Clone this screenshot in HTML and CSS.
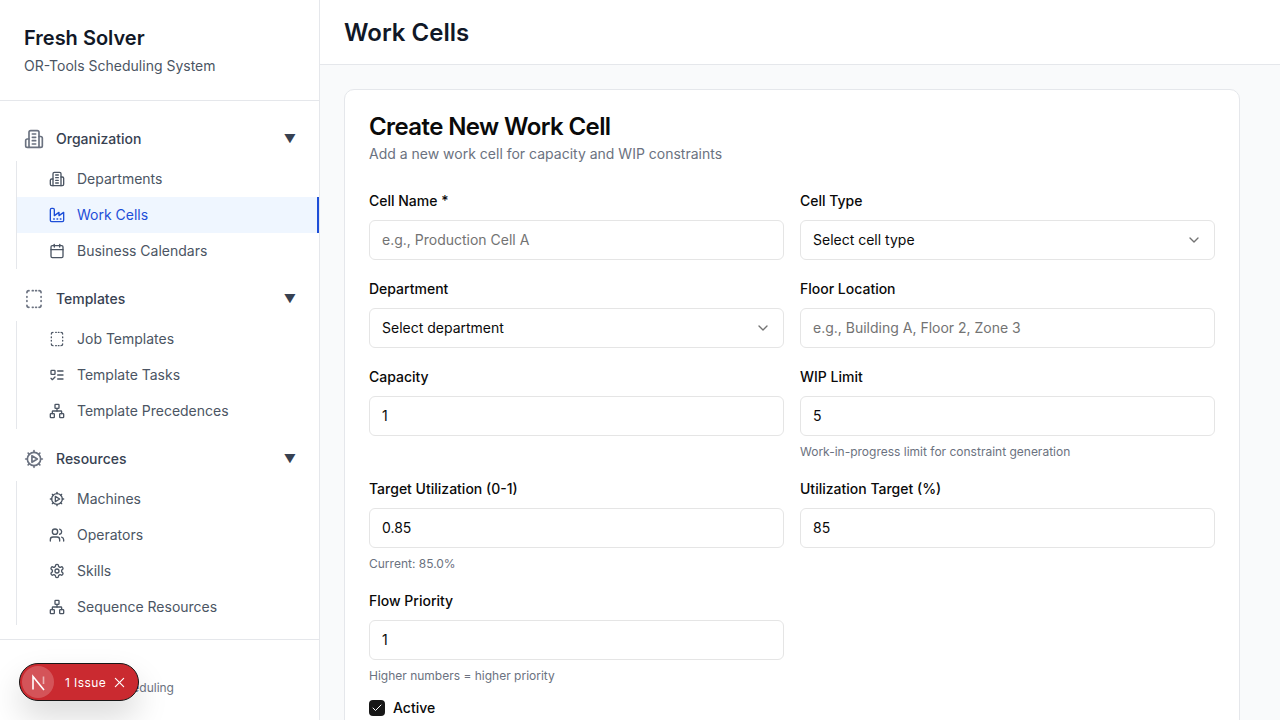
FILE: index.html
```html
<!DOCTYPE html>
<html lang="en">
<head>
  <meta charset="UTF-8">
  <title>Work Cells</title>
  <link rel="stylesheet" href="styles.css">
</head>
<body>
  <svg class="sprite" xmlns="http://www.w3.org/2000/svg">
    <symbol id="i-building" viewBox="0 0 24 24"><path d="M6 22V4a2 2 0 0 1 2-2h8a2 2 0 0 1 2 2v18Z"/><path d="M6 12H4a2 2 0 0 0-2 2v6a2 2 0 0 0 2 2h2"/><path d="M18 9h2a2 2 0 0 1 2 2v9a2 2 0 0 1-2 2h-2"/><path d="M10 6h4"/><path d="M10 10h4"/><path d="M10 14h4"/><path d="M10 18h4"/></symbol>
    <symbol id="i-factory" viewBox="0 0 24 24"><path d="M2 20a2 2 0 0 0 2 2h16a2 2 0 0 0 2-2V8l-7 5V8l-7 5V4a2 2 0 0 0-2-2H4a2 2 0 0 0-2 2Z"/><path d="M17 18h1"/><path d="M12 18h1"/><path d="M7 18h1"/></symbol>
    <symbol id="i-calendar" viewBox="0 0 24 24"><path d="M8 2v4"/><path d="M16 2v4"/><rect x="3" y="4" width="18" height="18" rx="2"/><path d="M3 10h18"/></symbol>
    <symbol id="i-dashed" viewBox="0 0 24 24"><path d="M6 2a2.5 2.5 0 0 0-2.5 2.5"/><path d="M18 2a2.5 2.5 0 0 1 2.5 2.5"/><path d="M20.5 19.5A2.5 2.5 0 0 1 18 22"/><path d="M6 22a2.5 2.5 0 0 1-2.5-2.5"/><path d="M10 2h1"/><path d="M14 2h1"/><path d="M10 22h1"/><path d="M14 22h1"/><path d="M3.5 9v1"/><path d="M20.5 9v1"/><path d="M3.5 14v1"/><path d="M20.5 14v1"/></symbol>
    <symbol id="i-todo" viewBox="0 0 24 24"><rect x="3" y="5" width="6" height="6" rx="1"/><path d="m3 17 2 2 4-4"/><path d="M13 6h8"/><path d="M13 12h8"/><path d="M13 18h8"/></symbol>
    <symbol id="i-network" viewBox="0 0 24 24"><rect x="16" y="16" width="6" height="6" rx="1"/><rect x="2" y="16" width="6" height="6" rx="1"/><rect x="9" y="2" width="6" height="6" rx="1"/><path d="M5 16v-3a1 1 0 0 1 1-1h12a1 1 0 0 1 1 1v3"/><path d="M12 12V8"/></symbol>
    <symbol id="i-machine" viewBox="0 0 24 24"><circle cx="12" cy="12" r="8"/><path d="M12 2v2"/><path d="M12 20v2"/><path d="m5 5 1.4 1.4"/><path d="m17.6 17.6 1.4 1.4"/><path d="M2 12h2"/><path d="M20 12h2"/><path d="m5 19 1.4-1.4"/><path d="m17.6 6.4 1.4-1.4"/><path d="M9.5 8v8l6.5-4Z"/></symbol>
    <symbol id="i-users" viewBox="0 0 24 24"><path d="M16 21v-2a4 4 0 0 0-4-4H6a4 4 0 0 0-4 4v2"/><path d="M16 3.13a4 4 0 0 1 0 7.75"/><path d="M22 21v-2a4 4 0 0 0-3-3.87"/><circle cx="9" cy="7" r="4"/></symbol>
    <symbol id="i-gear" viewBox="0 0 24 24"><path d="M12.22 2h-.44a2 2 0 0 0-2 2v.18a2 2 0 0 1-1 1.73l-.43.25a2 2 0 0 1-2 0l-.15-.08a2 2 0 0 0-2.73.73l-.22.38a2 2 0 0 0 .73 2.73l.15.1a2 2 0 0 1 1 1.72v.51a2 2 0 0 1-1 1.74l-.15.09a2 2 0 0 0-.73 2.73l.22.38a2 2 0 0 0 2.73.73l.15-.08a2 2 0 0 1 2 0l.43.25a2 2 0 0 1 1 1.73V20a2 2 0 0 0 2 2h.44a2 2 0 0 0 2-2v-.18a2 2 0 0 1 1-1.73l.43-.25a2 2 0 0 1 2 0l.15.08a2 2 0 0 0 2.73-.73l.22-.39a2 2 0 0 0-.73-2.73l-.15-.08a2 2 0 0 1-1-1.74v-.5a2 2 0 0 1 1-1.74l.15-.09a2 2 0 0 0 .73-2.73l-.22-.38a2 2 0 0 0-2.73-.73l-.15.08a2 2 0 0 1-2 0l-.43-.25a2 2 0 0 1-1-1.73V4a2 2 0 0 0-2-2z"/><circle cx="12" cy="12" r="3"/></symbol>
    <symbol id="i-chevron" viewBox="0 0 24 24"><path d="m6 9 6 6 6-6"/></symbol>
    <symbol id="i-close" viewBox="0 0 24 24"><path d="M21 3 3 21"/><path d="m3 3 18 18"/></symbol>
  </svg>

  <div class="shell">
    <aside class="sidebar">
      <div class="brand">
        <h1>Fresh Solver</h1>
        <p>OR-Tools Scheduling System</p>
      </div>

      <nav class="nav">
        <div class="nav-group">
          <div class="nav-head">
            <svg class="icon-lg"><use href="#i-building"/></svg>
            <span>Organization</span>
            <span class="caret">▼</span>
          </div>
          <ul class="nav-list">
            <li class="nav-item"><svg class="icon"><use href="#i-building"/></svg><span>Departments</span></li>
            <li class="nav-item active"><svg class="icon"><use href="#i-factory"/></svg><span>Work Cells</span></li>
            <li class="nav-item"><svg class="icon"><use href="#i-calendar"/></svg><span>Business Calendars</span></li>
          </ul>
        </div>

        <div class="nav-group">
          <div class="nav-head">
            <svg class="icon-lg"><use href="#i-dashed"/></svg>
            <span>Templates</span>
            <span class="caret">▼</span>
          </div>
          <ul class="nav-list">
            <li class="nav-item"><svg class="icon"><use href="#i-dashed"/></svg><span>Job Templates</span></li>
            <li class="nav-item"><svg class="icon"><use href="#i-todo"/></svg><span>Template Tasks</span></li>
            <li class="nav-item"><svg class="icon"><use href="#i-network"/></svg><span>Template Precedences</span></li>
          </ul>
        </div>

        <div class="nav-group">
          <div class="nav-head">
            <svg class="icon-lg"><use href="#i-machine"/></svg>
            <span>Resources</span>
            <span class="caret">▼</span>
          </div>
          <ul class="nav-list">
            <li class="nav-item"><svg class="icon"><use href="#i-machine"/></svg><span>Machines</span></li>
            <li class="nav-item"><svg class="icon"><use href="#i-users"/></svg><span>Operators</span></li>
            <li class="nav-item"><svg class="icon"><use href="#i-gear"/></svg><span>Skills</span></li>
            <li class="nav-item"><svg class="icon"><use href="#i-network"/></svg><span>Sequence Resources</span></li>
          </ul>
        </div>
      </nav>

      <div class="sidebar-foot">
        <p>Constraint Job Scheduling</p>
      </div>
    </aside>

    <main class="main">
      <header class="topbar">
        <h2>Work Cells</h2>
      </header>

      <div class="content">
        <section class="card">
          <h3>Create New Work Cell</h3>
          <p class="card-sub">Add a new work cell for capacity and WIP constraints</p>

          <form class="form-grid">
            <div class="field">
              <label>Cell Name *</label>
              <input type="text" placeholder="e.g., Production Cell A">
            </div>
            <div class="field">
              <label>Cell Type</label>
              <div class="select"><span>Select cell type</span><svg class="chev"><use href="#i-chevron"/></svg></div>
            </div>

            <div class="field">
              <label>Department</label>
              <div class="select"><span>Select department</span><svg class="chev"><use href="#i-chevron"/></svg></div>
            </div>
            <div class="field">
              <label>Floor Location</label>
              <input type="text" placeholder="e.g., Building A, Floor 2, Zone 3">
            </div>

            <div class="field">
              <label>Capacity</label>
              <input type="text" value="1">
            </div>
            <div class="field">
              <label>WIP Limit</label>
              <input type="text" value="5">
              <p class="help">Work-in-progress limit for constraint generation</p>
            </div>

            <div class="field">
              <label>Target Utilization (0-1)</label>
              <input type="text" value="0.85">
              <p class="help">Current: 85.0%</p>
            </div>
            <div class="field">
              <label>Utilization Target (%)</label>
              <input type="text" value="85">
            </div>

            <div class="field">
              <label>Flow Priority</label>
              <input type="text" value="1">
              <p class="help">Higher numbers = higher priority</p>
            </div>
          </form>

          <div class="check-row">
            <span class="checkbox">
              <svg viewBox="0 0 24 24"><path d="M20 6 9 17l-5-5"/></svg>
            </span>
            <span>Active</span>
          </div>
        </section>
      </div>
    </main>
  </div>

  <div class="issue-badge">
    <span class="issue-logo">
      <svg viewBox="0 0 32 32"><path class="logo-stem" d="M11 23.5V10.5L22 24"/><path class="logo-fade" d="M21.5 10.5V18"/></svg>
    </span>
    <span class="issue-text">1 Issue</span>
    <svg class="issue-close"><use href="#i-close"/></svg>
  </div>
</body>
</html>
```

FILE: styles.css
```css
* {
  box-sizing: border-box;
}
body {
  margin: 0;
  font-family: Inter, "Liberation Sans", sans-serif;
  font-size: 14px;
  color: #0a0a0a;
  overflow: hidden;
}
h1, h2, h3, p, ul {
  margin: 0;
  padding: 0;
}
.sprite {
  display: none;
}
.shell {
  display: flex;
  height: 100vh;
}

/* sidebar */
.sidebar {
  width: 320px;
  flex-shrink: 0;
  display: flex;
  flex-direction: column;
  background: #fff;
  border-right: 1px solid #e5e7eb;
}
.brand {
  padding: 24px;
  border-bottom: 1px solid #e5e7eb;
}
.brand h1 {
  font-size: 20px;
  line-height: 28px;
  font-weight: 600;
  color: #111827;
}
.brand p {
  margin-top: 4px;
  line-height: 20px;
  color: #4b5563;
}
.nav {
  flex: 1;
  overflow: hidden;
  padding-top: 16px;
}
.nav-group {
  margin-bottom: 8px;
}
.nav-head {
  display: flex;
  align-items: center;
  gap: 12px;
  height: 44px;
  padding: 0 24px;
  line-height: 20px;
  font-weight: 500;
  color: #374151;
}
.icon-lg {
  width: 20px;
  height: 20px;
  fill: none;
  stroke: #6b7280;
  stroke-width: 2;
  stroke-linecap: round;
  stroke-linejoin: round;
}
.nav-head .caret {
  margin-left: auto;
  margin-right: -1px;
  font-size: 12px;
  color: #374151;
}
.nav-list {
  list-style: none;
  margin-left: 16px;
  border-left: 1px solid #e5e7eb;
}
.nav-item {
  display: flex;
  align-items: center;
  gap: 12px;
  height: 36px;
  padding-left: 32px;
  line-height: 20px;
  color: #4b5563;
}
.icon {
  width: 16px;
  height: 16px;
  fill: none;
  stroke: currentColor;
  stroke-width: 2;
  stroke-linecap: round;
  stroke-linejoin: round;
}
.nav-item.active {
  background: #eff6ff;
  color: #1d4ed8;
  border-right: 2px solid #1d4ed8;
}
.sidebar-foot {
  padding: 40px 24px 24px;
  border-top: 1px solid #e5e7eb;
  font-size: 12px;
  line-height: 16px;
  color: #6b7280;
}

/* main area */
.main {
  flex: 1;
  min-width: 0;
  display: flex;
  flex-direction: column;
  background: #f9fafb;
}
.topbar {
  background: #fff;
  padding: 17px 24px 15px;
  border-bottom: 1px solid #e5e7eb;
}
.topbar h2 {
  font-size: 24px;
  line-height: 32px;
  font-weight: 600;
  color: #111827;
}
.content {
  flex: 1;
  overflow: hidden;
  padding: 24px;
}
.card {
  max-width: 896px;
  padding: 25px 24px 24px;
  background: #fff;
  border: 1px solid #e5e7eb;
  border-radius: 10px;
}
.card h3 {
  font-size: 24px;
  line-height: 24px;
  font-weight: 600;
  letter-spacing: -0.6px;
}
.card-sub {
  margin-top: 5px;
  line-height: 20px;
  color: #6b7280;
}
.form-grid {
  display: grid;
  grid-template-columns: 1fr 1fr;
  column-gap: 16px;
  row-gap: 22px;
  margin-top: 30px;
}
.field label {
  display: block;
  line-height: 14px;
  font-weight: 500;
  margin-bottom: 12px;
}
.field input, .select {
  display: flex;
  align-items: center;
  justify-content: space-between;
  width: 100%;
  height: 40px;
  padding: 0 12px;
  background: #fff;
  border: 1px solid #e5e5e5;
  border-radius: 6px;
  font: inherit;
  color: #0a0a0a;
}
.field input {
  padding-bottom: 2px;
}
.select span {
  margin-top: -2px;
}
.field input::placeholder {
  color: #737373;
}
.chev {
  width: 16px;
  height: 16px;
  fill: none;
  stroke: #737373;
  stroke-width: 2;
  stroke-linecap: round;
  stroke-linejoin: round;
}
.help {
  margin-top: 8px;
  font-size: 12px;
  line-height: 16px;
  color: #6b7280;
}
.check-row {
  display: flex;
  align-items: center;
  gap: 8px;
  margin-top: 16px;
  line-height: 16px;
  font-weight: 500;
}
.checkbox {
  display: flex;
  align-items: center;
  justify-content: center;
  width: 16px;
  height: 16px;
  background: #171717;
  border-radius: 4px;
}
.checkbox svg {
  width: 12px;
  height: 12px;
  fill: none;
  stroke: #fff;
  stroke-width: 2;
  stroke-linecap: round;
  stroke-linejoin: round;
}

/* dev overlay badge */
.issue-badge {
  position: absolute;
  left: 19px;
  top: 663px;
  display: flex;
  align-items: center;
  width: 120px;
  height: 38px;
  padding: 0 12px 0 2px;
  background: #ca2a30;
  border: 1px solid #171717;
  border-radius: 19px;
  box-shadow: 0 16px 32px rgba(0, 0, 0, 0.15);
  color: #fff;
}
.issue-logo {
  display: flex;
  width: 32px;
  height: 32px;
  border-radius: 50%;
  background: rgba(255, 255, 255, 0.2);
}
.issue-logo svg {
  width: 32px;
  height: 32px;
  fill: none;
  stroke-width: 1.6;
}
.logo-stem {
  stroke: #fff;
}
.logo-fade {
  stroke: rgba(255, 255, 255, 0.55);
}
.issue-text {
  margin-left: 11px;
  font-size: 12px;
  font-weight: 400;
  letter-spacing: 0.4px;
}
.issue-close {
  width: 11px;
  height: 11px;
  margin-left: auto;
  margin-right: 1px;
  fill: none;
  stroke: #fff;
  stroke-width: 2.6;
  stroke-linecap: round;
}
```
